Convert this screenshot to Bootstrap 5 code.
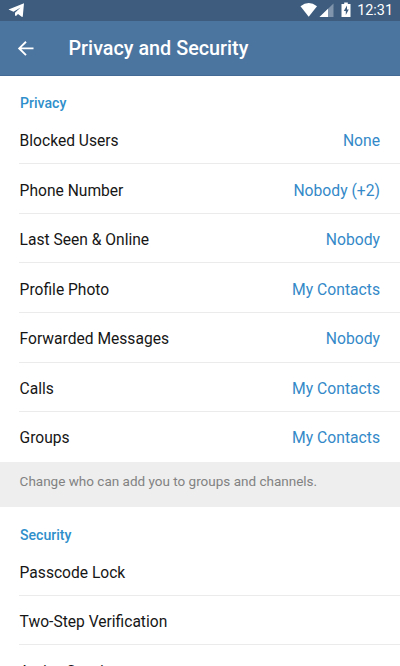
<!DOCTYPE html>
<html lang="en">
<head>
<meta charset="utf-8">
<meta name="viewport" content="width=device-width, initial-scale=1">
<title>Privacy and Security</title>
<link href="https://cdn.jsdelivr.net/npm/bootstrap@5.3.0/dist/css/bootstrap.min.css" rel="stylesheet">
<style>
body { font-family: Roboto, "Liberation Sans", sans-serif; font-size: 15.6px; color: #161616; background: #fff; height: 666px; }
.status-bar { height: 20.5px; background: #3d5c7e; font-size: 14.4px; padding: 0 7px 0 8px; }
.clock { line-height: 18px; padding-top: 1px; }
.app-bar { height: 55px; background: #4b749f; padding-left: 17px; border-bottom: 1px solid #426a94; }
.app-title { font-size: 19.8px; font-weight: 500; line-height: 24px; margin-left: 33.5px; padding-top: 2px; }
.section-title { height: 39.2px; padding: 17.4px 20px 0; font-size: 14.1px; line-height: 20px; font-weight: 500; color: #2f8fcb; }
.setting { height: 49.57px; margin-left: 19px; padding: 4.2px 20px 0 .6px; border-bottom: 1px solid #ebebeb; line-height: 24px; }
.setting:last-child { border-color: transparent; }
.setting-value { color: #3489c8; font-size: 15.7px; }
.hint { height: 45.5px; padding: 9.4px 19.6px 0; background: #eee; color: #828282; font-size: 13.5px; line-height: 20px; }
</style>
</head>
<body class="overflow-hidden d-flex flex-column">
<header class="text-white flex-shrink-0">
  <div class="status-bar d-flex align-items-center justify-content-between">
    <svg width="18" height="18" viewBox="0 0 18 18" fill="#fff"><path d="M.5 8.400 16 2.200 14.800 15.300q-.2 1-1.100.4L10 12.900l-2 2.200-1-.5v-2.800L12.600 6.600 5.500 10.800z"/></svg>
    <div class="d-flex align-items-center">
      <svg width="57" height="18" viewBox="0 0 57 18" fill="#fff">
        <path d="M.5 5.200Q8.700-1.200 17 5.200L8.700 15.700z"/>
        <path d="M33.500 2.500V16H19.500z" opacity=".35"/>
        <path d="M28 7.800V16H19.500z"/>
        <path fill-rule="evenodd" d="M44.200 1.500h3.600V3h2.700v13h-9V3h2.700zM47 4.500l-3.200 5.500h2v4l3-5.500h-1.800z"/>
      </svg>
      <span class="clock">12:31</span>
    </div>
  </div>
  <div class="app-bar d-flex align-items-center">
    <svg width="18" height="18" viewBox="0 0 18 18" fill="none" stroke="#fff" stroke-width="1.900"><path d="M16.500 9.400H2.500M9 2.700 2.200 9.400 9 16.100"/></svg>
    <h1 class="app-title mb-0">Privacy and Security</h1>
  </div>
</header>
<main class="flex-shrink-0">
  <section>
    <h2 class="section-title mb-0">Privacy</h2>
    <div>
      <div class="setting d-flex align-items-center justify-content-between"><span>Blocked Users</span><span class="setting-value">None</span></div>
      <div class="setting d-flex align-items-center justify-content-between"><span>Phone Number</span><span class="setting-value">Nobody (+2)</span></div>
      <div class="setting d-flex align-items-center justify-content-between"><span>Last Seen &amp; Online</span><span class="setting-value">Nobody</span></div>
      <div class="setting d-flex align-items-center justify-content-between"><span>Profile Photo</span><span class="setting-value">My Contacts</span></div>
      <div class="setting d-flex align-items-center justify-content-between"><span>Forwarded Messages</span><span class="setting-value">Nobody</span></div>
      <div class="setting d-flex align-items-center justify-content-between"><span>Calls</span><span class="setting-value">My Contacts</span></div>
      <div class="setting d-flex align-items-center justify-content-between"><span>Groups</span><span class="setting-value">My Contacts</span></div>
    </div>
    <p class="hint mb-0">Change who can add you to groups and channels.</p>
  </section>
  <section>
    <h2 class="section-title mb-0">Security</h2>
    <div>
      <div class="setting d-flex align-items-center">Passcode Lock</div>
      <div class="setting d-flex align-items-center">Two-Step Verification</div>
      <div class="setting d-flex align-items-center">Active Sessions</div>
    </div>
  </section>
</main>
<script src="https://cdn.jsdelivr.net/npm/bootstrap@5.3.0/dist/js/bootstrap.bundle.min.js"></script>
</body>
</html>
